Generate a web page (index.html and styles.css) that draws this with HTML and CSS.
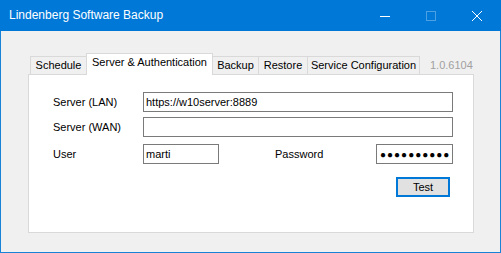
FILE: index.html
```html
<!DOCTYPE html>
<html lang="en">
<head>
<meta charset="UTF-8">
<title>Lindenberg Software Backup</title>
<link rel="stylesheet" href="styles.css">
</head>
<body>
<div class="window">
    <div class="titlebar">
        <div class="title">Lindenberg Software Backup</div>
        <div class="capbtn">
            <svg width="10" height="10" viewBox="0 0 10 10"><path d="M0 5.5H10" stroke="#fff" stroke-width="1"/></svg>
        </div>
        <div class="capbtn">
            <svg width="10" height="10" viewBox="0 0 10 10"><rect x="0.5" y="0.5" width="9" height="9" fill="none" stroke="#4da1e3" stroke-width="1"/></svg>
        </div>
        <div class="capbtn">
            <svg width="10" height="10" viewBox="0 0 10 10"><path d="M0 0L10 10M10 0L0 10" stroke="#fff" stroke-width="1"/></svg>
        </div>
    </div>
    <div class="client">
        <div class="tabstrip">
            <div class="tab tab-schedule">Schedule</div>
            <div class="tab tab-server active">Server &amp; Authentication</div>
            <div class="tab tab-backup">Backup</div>
            <div class="tab tab-restore">Restore</div>
            <div class="tab tab-service">Service Configuration</div>
            <div class="version">1.0.6104</div>
        </div>
        <div class="panel">
            <div class="row">
                <div class="label">Server (LAN)</div>
                <input class="field wide" type="text" value="https://w10server:8889">
            </div>
            <div class="row row-wan">
                <div class="label">Server (WAN)</div>
                <input class="field wide" type="text" value="">
            </div>
            <div class="row row-user">
                <div class="label">User</div>
                <input class="field short" type="text" value="marti">
                <div class="label label-pw">Password</div>
                <div class="field dots">●●●●●●●●●●</div>
            </div>
            <div class="actions">
                <button class="btn">Test</button>
            </div>
        </div>
    </div>
</div>
</body>
</html>
```
FILE: styles.css
```css
body {
    margin: 0;
    font-family: "Liberation Sans", Arial, sans-serif;
    font-size: 11px;
    color: #000;
}

.window {
    width: 501px;
    height: 253px;
    display: flex;
    flex-direction: column;
}

.titlebar {
    height: 31px;
    background-color: #0078d7;
    color: #fff;
    display: flex;
    align-items: center;
    padding: 0 1px 0 9px;
    font-size: 12px;
}

.title {
    flex: 1;
    padding-bottom: 1px;
}

.capbtn {
    width: 46px;
    height: 31px;
    display: flex;
    align-items: center;
    justify-content: center;
}

.client {
    flex: 1;
    background-color: #f0f0f0;
    border: 1px solid #1883d7;
    border-top: 0;
    padding: 22px 26px 19px 27px;
    display: flex;
    flex-direction: column;
}

.tabstrip {
    display: flex;
    align-items: flex-end;
    height: 22px;
    margin-bottom: -1px;
    padding-left: 2px;
}

.tab {
    box-sizing: border-box;
    height: 18px;
    margin-bottom: 1px;
    border: 1px solid #d9d9d9;
    border-left: 0;
    border-bottom: 0;
    background-color: #f0f0f0;
    text-align: center;
    line-height: 16px;
    white-space: nowrap;
}

.tab:first-child {
    border-left: 1px solid #d9d9d9;
}

.tab.active {
    height: 22px;
    margin-bottom: 0;
    margin-left: -1px;
    border-left: 1px solid #d9d9d9;
    background-color: #fff;
    position: relative;
    z-index: 1;
}

.tab-schedule { width: 57px; }
.tab-server { width: 127px; }
.tab-backup { width: 46px; }
.tab-restore { width: 49px; }
.tab-service { width: 112px; }

.version {
    height: 18px;
    margin: 0 0 1px 10px;
    padding-top: 1px;
    box-sizing: border-box;
    line-height: 16px;
    color: #a0a0a0;
}

.panel {
    flex: 1;
    background-color: #fff;
    border: 1px solid #d9d9d9;
    padding: 17px 0 0 24px;
}

.row {
    display: flex;
    align-items: center;
    height: 20px;
}

.row-wan {
    margin-top: 5px;
}

.row-user {
    margin-top: 7px;
}

.label {
    width: 90px;
}

.label-pw {
    margin-left: 56px;
    width: 101px;
}

.field {
    box-sizing: border-box;
    height: 20px;
    margin: 0;
    border: 1px solid #7a7a7a;
    border-radius: 0;
    padding: 0 2px;
    background-color: #fff;
    font-family: "Liberation Sans", Arial, sans-serif;
    font-size: 11px;
    color: #000;
    outline: none;
}

.wide {
    width: 310px;
}

.short {
    width: 76px;
}

.dots {
    width: 77px;
    display: flex;
    align-items: center;
    padding-left: 3px;
    font-size: 10px;
    letter-spacing: 1px;
    white-space: nowrap;
    overflow: hidden;
}

.actions {
    display: flex;
    justify-content: flex-end;
    width: 400px;
    margin-top: 13px;
}

.btn {
    box-sizing: border-box;
    width: 54px;
    height: 20px;
    margin-right: 3px;
    padding: 0;
    border: 2px solid #0078d7;
    border-radius: 0;
    background-color: #e1e1e1;
    font-family: "Liberation Sans", Arial, sans-serif;
    font-size: 11px;
    color: #000;
}
```
